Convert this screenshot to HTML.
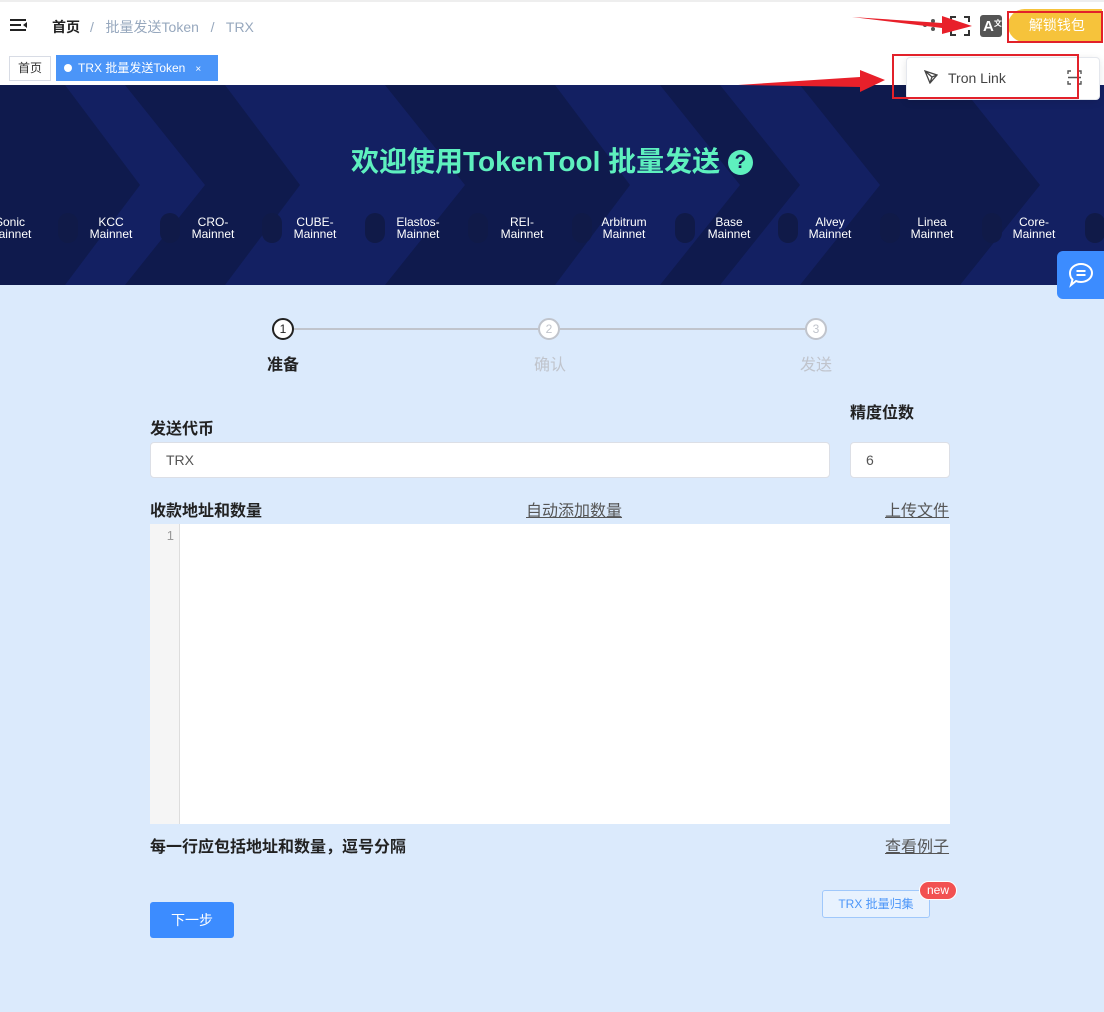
<!DOCTYPE html>
<html><head><meta charset="utf-8"><style>
*{margin:0;padding:0;box-sizing:border-box}
body{width:1104px;height:1012px;overflow:hidden;background:#dbeafc;font-family:"Liberation Sans","Noto Sans CJK SC",sans-serif;position:relative}
.abs{position:absolute}
.top{left:0;top:0;width:1104px;height:51px;background:#fff;border-top:2px solid #eee;box-shadow:0 1px 3px rgba(0,0,0,.06)}
.tags{left:0;top:51px;width:1104px;height:34px;background:#fff}
.net{position:absolute;top:216px;width:90px;margin-left:-45px;text-align:center;color:#fff;font-size:12px;line-height:12px}
.pill{position:absolute;top:213px;width:20px;height:30px;border-radius:10px;background:#101a48}
.lbl{font-size:16px;font-weight:bold;color:#222}
.u{font-size:16px;color:#555;text-decoration:underline}
</style></head><body>
<div class="abs top"></div>
<svg class="abs" style="left:10px;top:18px" width="18" height="14"><rect x="0" y="1" width="16" height="2" fill="#222"/><rect x="0" y="6" width="11" height="2" fill="#222"/><rect x="0" y="11" width="16" height="2" fill="#222"/><path d="M17 4 L13 7 L17 10Z" fill="#222"/></svg>
<div class="abs" style="left:52px;top:17px;font-size:14px;color:#222;font-weight:bold">首页</div>
<div class="abs" style="left:90px;top:17px;font-size:14px;color:#97a8be">/&nbsp;&nbsp; 批量发送Token &nbsp;&nbsp;/&nbsp;&nbsp; TRX</div>
<svg class="abs" style="left:922px;top:18px" width="14" height="14"><circle cx="3" cy="7" r="2" fill="#555"/><circle cx="11" cy="3" r="2" fill="#555"/><circle cx="11" cy="11" r="2" fill="#555"/></svg>
<svg class="abs" style="left:950px;top:16px" width="20" height="20" fill="none" stroke="#333" stroke-width="2"><path d="M1 6V1h5M14 1h5v5M19 14v5h-5M6 19H1v-5"/></svg>
<div class="abs" style="left:980px;top:15px;width:22px;height:22px;background:#555;border-radius:3px;color:#fff;font-weight:bold;font-size:15px;padding:3px 0 0 3px">A<span style="font-size:8px;vertical-align:top">文</span></div>
<div class="abs" style="left:1008px;top:9px;width:94px;height:33px;background:#f6c33b;border-radius:17px 0 0 17px;color:#fff;font-size:14px;text-align:center;line-height:33px">&nbsp;解锁钱包</div>
<div class="abs" style="left:1007px;top:11px;width:96px;height:32px;border:2px solid #e2212a"></div>
<div class="abs tags"></div>
<div class="abs" style="left:9px;top:56px;width:42px;height:25px;border:1px solid #d8dce5;font-size:12px;color:#333;text-align:center;line-height:23px">首页</div>
<div class="abs" style="left:56px;top:55px;width:162px;height:26px;background:#4b95f8;color:#fff;font-size:12px;line-height:26px;padding-left:8px"><span style="display:inline-block;width:8px;height:8px;border-radius:4px;background:#fff;margin-right:6px"></span>TRX 批量发送Token &nbsp;&nbsp;<span style="font-size:10px">×</span></div>
<!-- banner -->
<svg class="abs" style="left:0;top:85px" width="1104" height="200">
<rect width="1104" height="200" fill="#0f1a4d"/>
<g fill="#132062">
<polygon points="65,0 125,0 205,100 125,200 65,200 140,100"/>
<polygon points="225,0 385,0 465,100 385,200 225,200 300,100"/>
<polygon points="555,0 660,0 740,100 660,200 555,200 630,100"/>
<polygon points="720,0 800,0 880,100 800,200 720,200 800,100"/>
<polygon points="960,0 1104,0 1104,200 960,200 1040,100"/>
</g>
</svg>
<div class="abs" style="left:0;top:140px;width:1104px;text-align:center;color:#5ef0be;font-size:28px;font-weight:bold;padding-left:0">欢迎使用TokenTool 批量发送 <span style="display:inline-block;width:25px;height:25px;border-radius:13px;background:#5ef0be;color:#0f1a4b;font-size:19px;line-height:25px;vertical-align:3px">?</span></div>
<div class="pill" style="left:58px"></div><div class="pill" style="left:160px"></div><div class="pill" style="left:262px"></div><div class="pill" style="left:365px"></div><div class="pill" style="left:468px"></div><div class="pill" style="left:572px"></div><div class="pill" style="left:675px"></div><div class="pill" style="left:778px"></div><div class="pill" style="left:880px"></div><div class="pill" style="left:982px"></div><div class="pill" style="left:1085px"></div>
<div class="net" style="left:10px">Sonic<br>Mainnet</div>
<div class="net" style="left:111px">KCC<br>Mainnet</div>
<div class="net" style="left:213px">CRO-<br>Mainnet</div>
<div class="net" style="left:315px">CUBE-<br>Mainnet</div>
<div class="net" style="left:418px">Elastos-<br>Mainnet</div>
<div class="net" style="left:522px">REI-<br>Mainnet</div>
<div class="net" style="left:624px">Arbitrum<br>Mainnet</div>
<div class="net" style="left:729px">Base<br>Mainnet</div>
<div class="net" style="left:830px">Alvey<br>Mainnet</div>
<div class="net" style="left:932px">Linea<br>Mainnet</div>
<div class="net" style="left:1034px">Core-<br>Mainnet</div>
<!-- dropdown -->
<div class="abs" style="left:906px;top:57px;width:194px;height:43px;background:#fff;border:1px solid #e4e7ed;border-radius:4px;box-shadow:0 2px 8px rgba(0,0,0,.1)"></div>
<svg class="abs" style="left:924px;top:70px" width="14" height="14" fill="none" stroke="#444" stroke-width="1.3"><path d="M1 1L13 5L6 13Z M1 1L8 7L13 5 M8 7L6 13"/></svg>
<div class="abs" style="left:948px;top:70px;font-size:14px;color:#444">Tron Link</div>
<svg class="abs" style="left:1067px;top:70px" width="15" height="15" fill="none" stroke="#555" stroke-width="1.4"><path d="M1 4V1h3M11 1h3v3M14 11v3h-3M4 14H1v-3M1 7.5h13"/></svg>
<div class="abs" style="left:892px;top:54px;width:187px;height:45px;border:2px solid #e2212a"></div>
<!-- arrows -->
<svg class="abs" style="left:730px;top:0" width="250" height="100">
<path d="M122 17 L212 23 L212 16 L242 26 L212 34 L212 28 Z" fill="#e8202a"/>
<path d="M8 85 L130 77 L130 70 L155 80 L130 92 L130 87 Z" fill="#e8202a"/>
</svg>
<!-- chat -->
<div class="abs" style="left:1057px;top:251px;width:47px;height:48px;background:#3c8cff;border-radius:6px 0 0 6px"></div>
<svg class="abs" style="left:1068px;top:262px" width="26" height="26" fill="none" stroke="#fff" stroke-width="2"><path d="M13 2C19 2 24 6 24 11C24 16 19 20 13 20C11 20 9 19.5 8 19L3 23L4.5 17.5C2.8 16 2 13.6 2 11C2 6 7 2 13 2Z"/><path d="M8.5 9h9M8.5 13h9"/></svg>
<!-- steps -->
<div class="abs" style="left:294px;top:328px;width:244px;height:2px;background:#c0c4cc"></div>
<div class="abs" style="left:560px;top:328px;width:245px;height:2px;background:#c0c4cc"></div>
<div class="abs" style="left:272px;top:318px;width:22px;height:22px;border:2px solid #222;border-radius:11px;background:#fff;text-align:center;font-size:12px;line-height:18px;color:#222">1</div>
<div class="abs" style="left:538px;top:318px;width:22px;height:22px;border:2px solid #c0c4cc;border-radius:11px;background:#fff;text-align:center;font-size:12px;line-height:18px;color:#c0c4cc">2</div>
<div class="abs" style="left:805px;top:318px;width:22px;height:22px;border:2px solid #c0c4cc;border-radius:11px;background:#fff;text-align:center;font-size:12px;line-height:18px;color:#c0c4cc">3</div>
<div class="abs" style="left:267px;top:351px;font-size:16px;font-weight:bold;color:#222">准备</div>
<div class="abs" style="left:534px;top:351px;font-size:16px;color:#c0c4cc">确认</div>
<div class="abs" style="left:800px;top:351px;font-size:16px;color:#c0c4cc">发送</div>
<!-- form -->
<div class="abs lbl" style="left:150px;top:415px">发送代币</div>
<div class="abs lbl" style="left:850px;top:399px">精度位数</div>
<div class="abs" style="left:150px;top:442px;width:680px;height:36px;background:#fff;border:1px solid #dcdfe6;border-radius:4px;font-size:14px;color:#555;line-height:34px;padding-left:15px">TRX</div>
<div class="abs" style="left:850px;top:442px;width:100px;height:36px;background:#fff;border:1px solid #dcdfe6;border-radius:4px;font-size:14px;color:#555;line-height:34px;padding-left:15px">6</div>
<div class="abs lbl" style="left:150px;top:497px">收款地址和数量</div>
<div class="abs u" style="left:526px;top:497px">自动添加数量</div>
<div class="abs u" style="left:885px;top:497px">上传文件</div>
<div class="abs" style="left:150px;top:524px;width:800px;height:300px;background:#fff"></div>
<div class="abs" style="left:150px;top:524px;width:30px;height:300px;background:#f5f5f5;border-right:1px solid #ddd;font-size:13px;color:#999;text-align:right;padding:4px 5px 0 0">1</div>
<div class="abs lbl" style="left:150px;top:833px">每一行应包括地址和数量，逗号分隔</div>
<div class="abs u" style="left:885px;top:833px">查看例子</div>
<div class="abs" style="left:150px;top:902px;width:84px;height:36px;background:#3c8cff;border-radius:3px;color:#fff;font-size:14px;text-align:center;line-height:36px">下一步</div>
<div class="abs" style="left:822px;top:890px;width:108px;height:28px;border:1px solid #a0c8fb;border-radius:3px;background:#e8f2fe;color:#4b95f8;font-size:12px;text-align:center;line-height:26px">TRX 批量归集</div>
<div class="abs" style="left:919px;top:881px;width:38px;height:19px;background:#f25151;border:1px solid #fff;border-radius:10px;color:#fff;font-size:12px;text-align:center;line-height:17px">new</div>
</body></html>
